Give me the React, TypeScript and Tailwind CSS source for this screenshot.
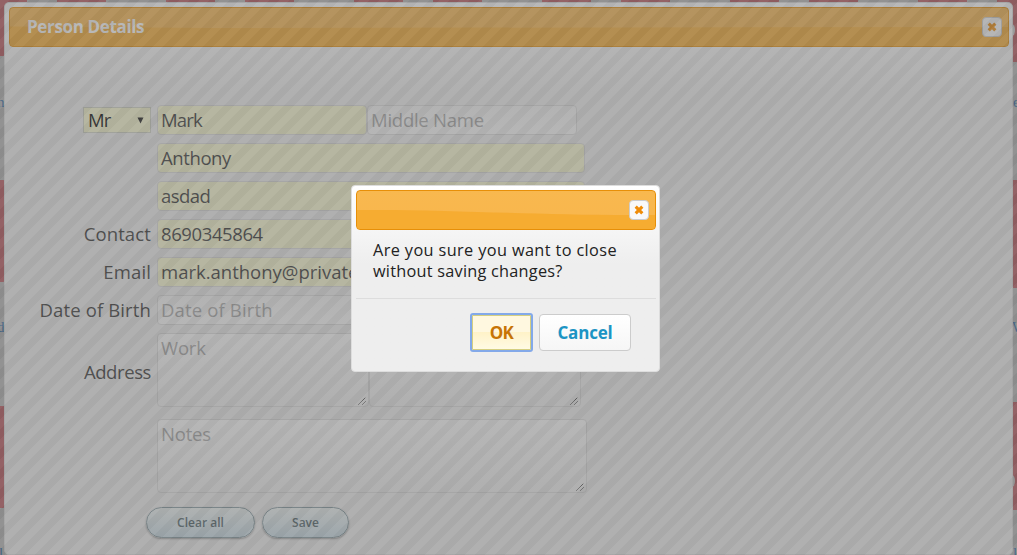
import type { ReactNode } from "react";

const field =
  "h-[30px] shrink-0 rounded-[4px] border border-[#dadada] bg-[#fafad0] px-[3px] text-[18.5px] leading-[28px] text-[#333333] whitespace-nowrap overflow-hidden";
const emptyField =
  "h-[30px] shrink-0 rounded-[4px] border border-[#dadada] bg-linear-to-b from-[#f3f3f3] to-[#fafafa] px-[3px] text-[18.5px] leading-[28px] text-[#a6a6a6] whitespace-nowrap overflow-hidden";
const area =
  "relative h-[74px] shrink-0 rounded-[4px] border border-[#dadada] bg-linear-to-b from-[#fbfbfb] to-[#eeeeee] px-[3px] text-[18.5px] leading-[28px] tracking-[-0.2px] text-[#a6a6a6]";

function Grip() {
  return (
    <svg className="absolute right-[2px] bottom-px" width="8" height="8" viewBox="0 0 8 8">
      <path d="M0.5 7.5L7.5 0.5M4.5 7.5L7.5 4.5" stroke="#222" strokeWidth="1" strokeDasharray="1.1 0.5" />
    </svg>
  );
}

function CloseButton() {
  return (
    <div className="flex h-[20px] w-[20px] items-center justify-center rounded-[4px] border border-[#cccccc] bg-[#f9f9f9]">
      <svg className="shrink-0" width="10" height="10" viewBox="0 0 10 10">
        <path d="M1.7 1.7L8.3 8.3M8.3 1.7L1.7 8.3" stroke="#ef8c08" strokeWidth="3.1" />
      </svg>
    </div>
  );
}

function Wave({ flat }: { flat?: boolean }) {
  return (
    <svg className="absolute inset-0 h-full w-full" viewBox="0 0 300 38" preserveAspectRatio="none">
      <path
        d={flat ? "M0 18.5L60 20L300 19V38H0Z" : "M0 19C100 18 180 25 300 24V38H0Z"}
        fill="#f6a828"
        fillOpacity="0.75"
      />
    </svg>
  );
}

function Row({ label, children, tall }: { label?: ReactNode; children: ReactNode; tall?: boolean }) {
  return (
    <div className={tall ? "flex h-[74px] items-center" : "flex h-[30px] items-center"}>
      <div className="mr-[6px] flex w-[146px] justify-end text-[18.5px] tracking-[0.13px] whitespace-nowrap text-[#333333]">{label}</div>
      {children}
    </div>
  );
}

function Backdrop() {
  const columns = [-22, 57, 166, 245, 354, 433, 542, 621, 730, 809, 918, 997];
  return (
    <svg className="absolute inset-0" width="1017" height="555">
      <rect width="1017" height="555" fill="#b2b2b2" />
      {columns.map((x) => (
        <rect key={x} x={x} y="0" width="49" height="2" fill="#b65259" />
      ))}
      {[-46, 180, 406].map((y) => (
        <rect key={y} x="-30" y={y} width="38" height="102" rx="5" fill="#b65259" />
      ))}
      {[-46, 180, 402].map((y) => (
        <rect key={y} x="1008" y={y} width="30" height="108" rx="5" fill="#b65259" />
      ))}
      <ellipse cx="1012" cy="30" rx="3" ry="6" fill="#c4c4c4" />
      <ellipse cx="1012" cy="481" rx="3" ry="6" fill="#c4c4c4" />
      <g fill="#28639f" fontFamily="Liberation Serif, serif" fontSize="15">
        <text x="-3" y="107">n</text>
        <text x="1013" y="107">e</text>
        <text x="-3" y="332">d</text>
        <text x="1012" y="332">W</text>
        <text x="-1" y="558">l</text>
        <text x="1013" y="558">l</text>
      </g>
    </svg>
  );
}

export default function App() {
  return (
    <div className="relative h-[555px] w-[1017px] overflow-hidden font-['Open_Sans',sans-serif]">
      <Backdrop />
      <div className="relative h-full px-[4px] pt-[2px]">
        <div className="h-[553px] rounded-[5px] border border-[#dddddd] bg-[#eeeeee] bg-linear-to-b from-[#ffffff] to-[#eeeeee] to-[90px] p-[4px] pr-[3px]">
          <div className="relative flex h-[40px] items-center justify-between overflow-hidden rounded-[4px] border border-[#e78f08] bg-linear-to-b from-[#f8b64d] to-[#f8b44a] pr-[6px] pl-[17px]">
            <Wave flat />
            <span className="relative text-[17px] font-bold tracking-[-0.35px] text-white">Person Details</span>
            <div className="relative"><CloseButton /></div>
          </div>
          <div className="flex flex-col pt-[58px]">
            <div className="-ml-[4px] flex flex-col gap-[8px]">
              <Row
                label={
                  <div className="flex h-[26px] w-[68px] items-center justify-between border border-[#cfd2c4] bg-[#fafad0] pr-[6px] pl-[4px] text-[18.5px] tracking-[-0.8px] text-black">
                    <span>Mr</span>
                    <svg width="7" height="7" viewBox="0 0 7 7"><path d="M0.5 0.5H6.5L3.5 6.5Z" fill="#111" /></svg>
                  </div>
                }
              >
                <div className={`${field} w-[210px] tracking-[-0.8px]`}>Mark</div>
                <div className={`${emptyField} w-[210px] tracking-[-0.25px]`}>Middle Name</div>
              </Row>
              <Row><div className={`${field} w-[428px] tracking-[-0.4px]`}>Anthony</div></Row>
              <Row><div className={`${field} w-[428px] tracking-[-0.55px]`}>asdad</div></Row>
              <Row label="Contact"><div className={`${field} w-[428px] tracking-[-0.4px]`}>8690345864</div></Row>
              <Row label="Email"><div className={`${field} w-[428px]`}>mark.anthony@private</div></Row>
              <Row label="Date of Birth"><div className={`${emptyField} w-[428px] tracking-[0.15px]`}>Date of Birth</div></Row>
              <Row tall label={<span className="pt-[4px] tracking-[-0.4px]">Address</span>}>
                <div className={`${area} w-[212px]`}>Work<Grip /></div>
                <div className={`${area} w-[212px]`}><Grip /></div>
              </Row>
            </div>
            <div className="mt-[12px] -ml-[4px]">
              <Row tall><div className={`${area} w-[430px]`}>Notes<Grip /></div></Row>
            </div>
            <div className="mt-[14px] ml-[137px] flex gap-[7px] text-[12px] font-semibold text-[#4c6066]">
              <div className="flex h-[31px] w-[109px] items-center justify-center rounded-full border border-[#8499a0] bg-linear-to-b from-[#edf3f2] to-[#c9dce6] shadow-[0_1px_2px_#999]">Clear all</div>
              <div className="flex h-[31px] w-[87px] items-center justify-center rounded-full border border-[#8499a0] bg-linear-to-b from-[#edf3f2] to-[#c9dce6] shadow-[0_1px_2px_#999]">Save</div>
            </div>
          </div>
        </div>
      </div>
      <div className="absolute inset-0 bg-[repeating-linear-gradient(135deg,#727272_0px,#727272_7.071px,#656565_7.071px,#656565_14.142px)] opacity-50" />
      <div className="absolute top-[185px] left-[351px] h-[187px] w-[309px] rounded-[4px] border border-[#dddddd] bg-[#eeeeee] bg-linear-to-b from-[#ffffff] to-[#eeeeee] to-[78px] p-[4px] pr-[3px]">
        <div className="relative flex h-[40px] items-center justify-end overflow-hidden rounded-[4px] border border-[#e78f08] bg-linear-to-b from-[#f8b84f] to-[#f8b64c] pr-[6px]">
          <Wave />
          <div className="relative"><CloseButton /></div>
        </div>
        <div className="h-[68px] pt-[10px] pl-[17px] text-[16.3px] leading-[21px] whitespace-nowrap text-[#222222]">
          <div className="tracking-[0.38px]">Are you sure you want to close</div>
          <div className="tracking-[0.24px]">without saving changes?</div>
        </div>
        <div className="flex gap-[6px] border-t border-[#dddddd] pt-[14px] pl-[114px] text-[17px] font-bold">
          <div className="flex h-[39px] w-[63px] items-center justify-center rounded-[3px] border-2 border-[#83a9e9] bg-[linear-gradient(#fff8e0_0%,#fff8e0_48%,#fff2c8_49%,#fffbe5_100%)] tracking-[-0.6px] text-[#c77405] shadow-[inset_0_0_0_1px_#d5cf80]">OK</div>
          <div className="mt-px flex h-[37px] w-[92px] items-center justify-center rounded-[4px] border border-[#cccccc] bg-linear-to-b from-[#ffffff] to-[#f6f6f6] tracking-[-0.2px] text-[#1c94c4]">Cancel</div>
        </div>
      </div>
    </div>
  );
}
